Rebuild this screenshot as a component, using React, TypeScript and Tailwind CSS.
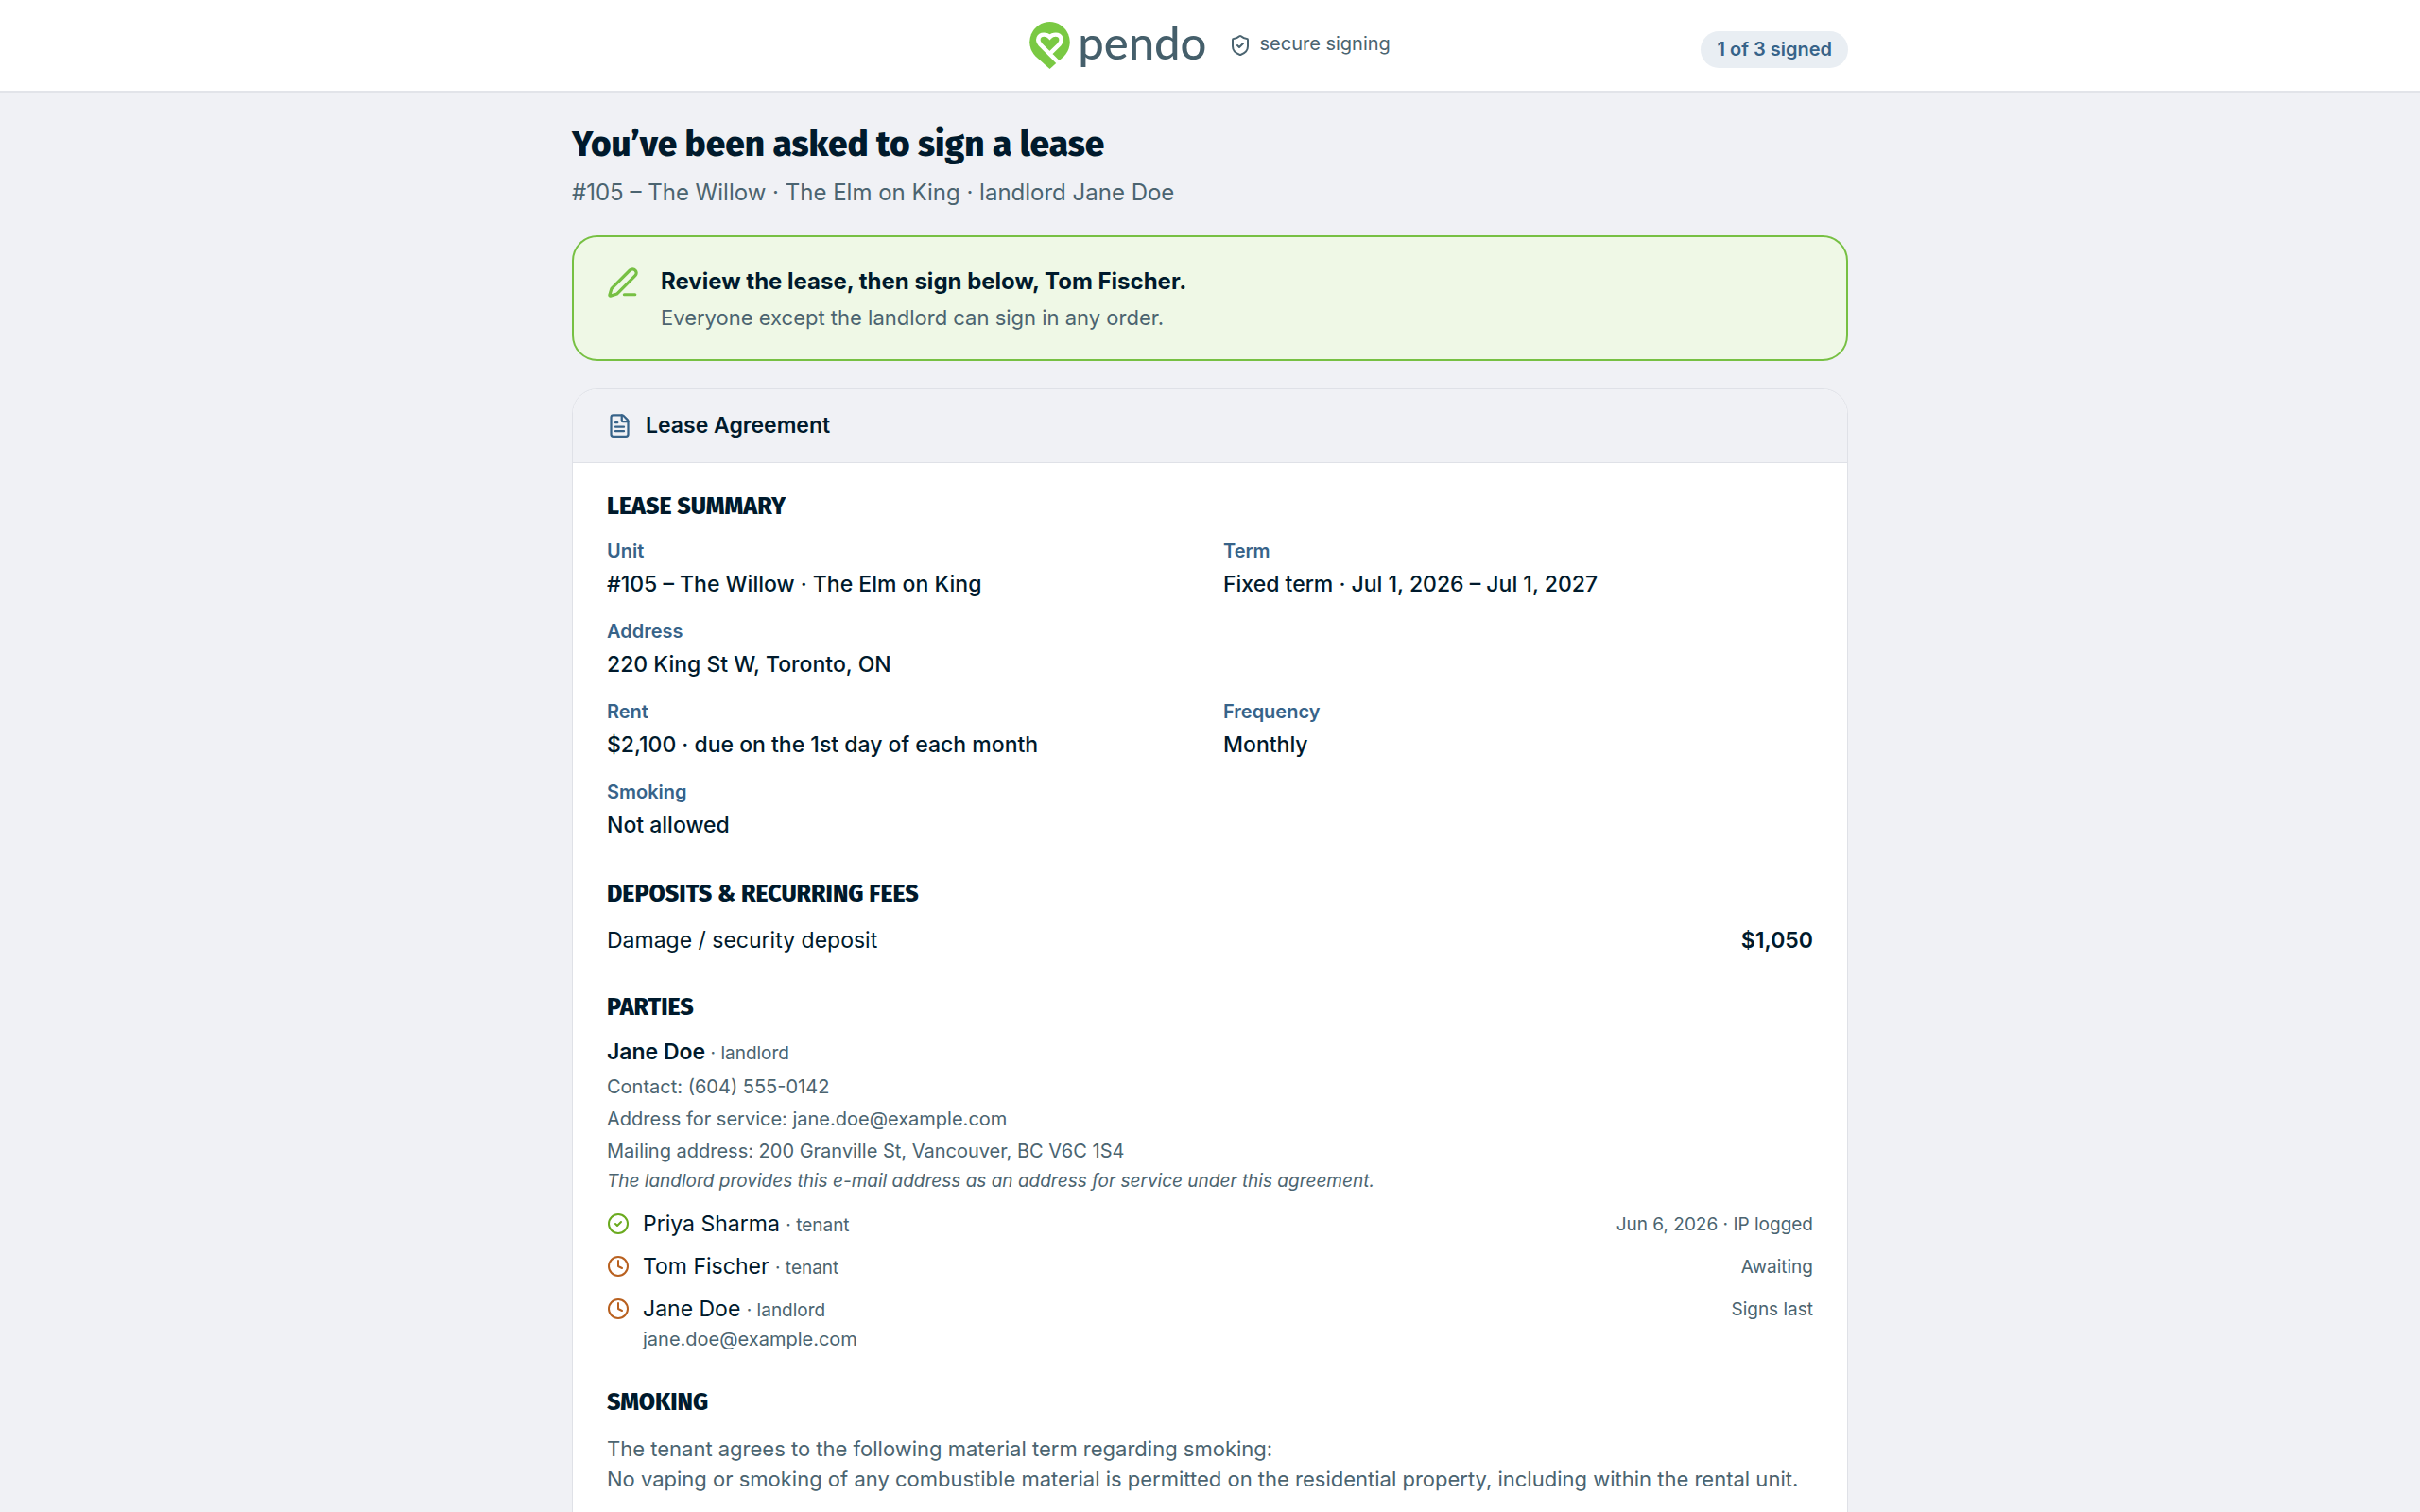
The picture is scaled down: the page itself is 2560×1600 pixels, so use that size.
import { CircleCheck, Clock, FileText, PenLine, ShieldCheck } from 'lucide-react'
import type { ReactNode } from 'react'

type Detail = { label: string; value: string; wide?: boolean }

type Signer = {
  name: string
  role: string
  status: string
  signed: boolean
  email?: string
}

const details: Detail[] = [
  { label: 'Unit', value: '#105 – The Willow · The Elm on King' },
  { label: 'Term', value: 'Fixed term · Jul 1, 2026 – Jul 1, 2027' },
  { label: 'Address', value: '220 King St W, Toronto, ON', wide: true },
  { label: 'Rent', value: '$2,100 · due on the 1st day of each month' },
  { label: 'Frequency', value: 'Monthly' },
  { label: 'Smoking', value: 'Not allowed' },
]

const signers: Signer[] = [
  { name: 'Priya Sharma', role: 'tenant', status: 'Jun 6, 2026 · IP logged', signed: true },
  { name: 'Tom Fischer', role: 'tenant', status: 'Awaiting', signed: false },
  { name: 'Jane Doe', role: 'landlord', status: 'Signs last', signed: false, email: 'jane.doe@example.com' },
]

function PendoLogo() {
  return (
    <div className="flex items-center gap-2">
      <svg viewBox="0 0 43 50" className="h-[50px] w-[43px]" aria-hidden="true">
        <path d="M21.5 0A21.4 21.4 0 0 0 6.4 36.4L21.5 50L36.6 36.4A21.4 21.4 0 0 0 21.5 0Z" fill="#7ac943" />
        <path
          d="M34 46.6L11.4 24C7.4 19.5 9.6 13.6 15.2 13.6C18 13.6 20 14.6 21.5 16.2C23 14.6 25 13.6 27.8 13.6C33.4 13.6 35.6 19.5 31.6 24L21.5 33.8"
          fill="none"
          stroke="#fff"
          strokeWidth="4.4"
        />
      </svg>
      <span className="pb-2 font-['Lato',sans-serif] text-[49px] leading-[50px] font-medium text-[#455f6b]">
        pendo
      </span>
    </div>
  )
}

function Section({ title, children }: { title: string; children: ReactNode }) {
  return (
    <section>
      <h2 className="mb-[15px] font-['Fira_Sans','Noto_Sans',sans-serif] text-[25px] leading-8 font-extrabold uppercase">
        {title}
      </h2>
      {children}
    </section>
  )
}

function SignerRow({ signer }: { signer: Signer }) {
  return (
    <li className="flex items-start gap-[14px]">
      {signer.signed ? (
        <CircleCheck className="mt-1.5 size-6 shrink-0 text-[#6aaa1e]" />
      ) : (
        <Clock className="mt-1.5 size-6 shrink-0 text-[#b8601f]" />
      )}
      <div className="flex-1">
        <p className="text-[23px] leading-9">
          {signer.name} <span className="text-[19px] leading-none text-[#4b6470]">· {signer.role}</span>
        </p>
        {signer.email && <p className="text-[20px] leading-7 text-[#4b6470]">{signer.email}</p>}
      </div>
      <span className="pt-0.5 text-[19px] leading-[34px] text-[#4b6470]">{signer.status}</span>
    </li>
  )
}

function App() {
  return (
    <div className="flex min-h-screen flex-col bg-[#f0f1f5] font-['Inter',sans-serif] text-[#001a2c]">
      <header className="border-b-2 border-[#e2e4e9] bg-white">
        <div className="mx-auto grid h-24 max-w-[1350px] grid-cols-[1fr_auto_1fr] items-center">
          <div className="col-start-2 flex items-center gap-6">
            <PendoLogo />
            <span className="flex items-center gap-2 text-[20px] leading-8 text-[#4b6470]">
              <ShieldCheck className="size-6" />
              <span className="pb-1">secure signing</span>
            </span>
          </div>
          <span className="mt-2 justify-self-end rounded-full bg-[#e9eef3] px-[17px] py-1 text-[20px] leading-[31px] font-semibold text-[#376389]">
            1 of 3 signed
          </span>
        </div>
      </header>

      <main className="mx-auto flex w-full max-w-[1350px] flex-1 flex-col pt-8">
        <h1 className="font-['Fira_Sans','Noto_Sans',sans-serif] text-[37px] leading-[46px] font-extrabold">
          You’ve been asked to sign a lease
        </h1>
        <p className="mt-[10px] text-[24px] leading-9 text-[#4b6470]">
          #105 – The Willow · The Elm on King · landlord Jane Doe
        </p>

        <div className="mt-[27px] flex gap-[23px] rounded-[27px] border-2 border-[#77c043] bg-[#eff8e6] px-[35px] pt-[29px] pb-7">
          <PenLine className="mt-0.5 size-[34px] shrink-0 text-[#77c043]" strokeWidth={2.25} />
          <div>
            <p className="text-[24px] leading-9 font-bold">Review the lease, then sign below, Tom Fischer.</p>
            <p className="mt-1 text-[22px] leading-8 text-[#4b6470]">
              Everyone except the landlord can sign in any order.
            </p>
          </div>
        </div>

        <article className="mt-[29px] flex-1 overflow-hidden rounded-t-[27px] border border-b-0 border-[#dfe1e7] bg-white">
          <div className="flex items-center gap-[14px] border-b border-[#dfe1e7] bg-[#f0f1f5] px-9 py-5">
            <FileText className="size-[27px] text-[#376389]" />
            <span className="text-[23px] leading-[37px] font-semibold">Lease Agreement</span>
          </div>

          <div className="flex flex-col gap-[37px] px-9 pt-[30px]">
            <Section title="Lease summary">
              <dl className="grid grid-cols-2 gap-x-7 gap-y-4 pb-0.5">
                {details.map((item) => (
                  <div key={item.label} className={item.wide ? 'col-span-2' : undefined}>
                    <dt className="text-[20px] leading-[33px] font-semibold text-[#376389]">{item.label}</dt>
                    <dd className="text-[23px] leading-9 font-medium">{item.value}</dd>
                  </div>
                ))}
              </dl>
            </Section>

            <Section title="Deposits & recurring fees">
              <div className="flex justify-between text-[23px] leading-9">
                <span>Damage / security deposit</span>
                <span className="font-semibold">$1,050</span>
              </div>
            </Section>

            <Section title="Parties">
              <div className="text-[20px] leading-[34px] text-[#4b6470]">
                <p className="text-[19px] leading-9">
                  <span className="text-[23px] leading-none font-semibold text-[#001a2c]">Jane Doe</span> · landlord
                </p>
                <p>Contact: (604) 555-0142</p>
                <p>Address for service: jane.doe@example.com</p>
                <p>Mailing address: 200 Granville St, Vancouver, BC V6C 1S4</p>
                <p className="text-[19px] leading-[30px] italic">
                  The landlord provides this e-mail address as an address for service under this agreement.
                </p>
              </div>
              <ul className="mt-3 flex flex-col gap-[9px]">
                {signers.map((signer) => (
                  <SignerRow key={signer.name} signer={signer} />
                ))}
              </ul>
            </Section>

            <Section title="Smoking">
              <p className="pt-0.5 text-[22px] leading-8 text-[#4b6470]">
                The tenant agrees to the following material term regarding smoking:
                <br />
                No vaping or smoking of any combustible material is permitted on the residential property, including
                within the rental unit.
              </p>
            </Section>
          </div>
        </article>
      </main>
    </div>
  )
}

export default App
